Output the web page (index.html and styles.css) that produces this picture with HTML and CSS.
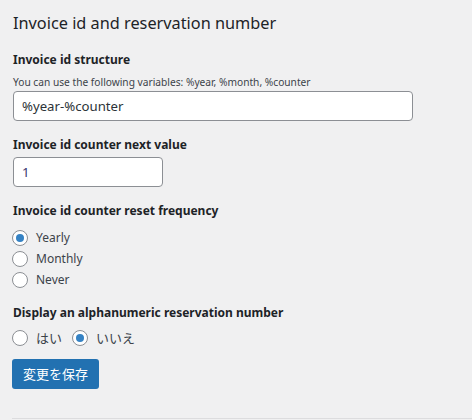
FILE: index.html
```html
<!DOCTYPE html>
<html lang="en">
<head>
<meta charset="utf-8">
<link rel="stylesheet" href="styles.css">
</head>
<body>
<div class="wrap">
  <h2 class="title">Invoice id and reservation number</h2>

  <div class="field first">
    <div class="label">Invoice id structure</div>
    <div class="help">You can use the following variables: %year, %month, %counter</div>
    <div class="input wide">%year-%counter</div>
  </div>

  <div class="field">
    <div class="label">Invoice id counter next value</div>
    <div class="input narrow num">1</div>
  </div>

  <div class="field">
    <div class="label">Invoice id counter reset frequency</div>
    <div class="radios">
      <div class="radio-row"><span class="radio checked"></span><span class="rtext">Yearly</span></div>
      <div class="radio-row"><span class="radio"></span><span class="rtext">Monthly</span></div>
      <div class="radio-row"><span class="radio"></span><span class="rtext">Never</span></div>
    </div>
  </div>

  <div class="field after-radios">
    <div class="label">Display an alphanumeric reservation number</div>
    <div class="inline-radios">
      <div class="radio-row"><span class="radio"></span><span class="rtext jp">はい</span></div>
      <div class="radio-row"><span class="radio checked"></span><span class="rtext jp">いいえ</span></div>
    </div>
  </div>

  <div class="button">変更を保存</div>
</div>
<div class="rule"></div>
</body>
</html>
```

FILE: styles.css
```css
html, body {
  margin: 0;
  padding: 0;
  background: #f0f0f1;
}
body {
  font-family: "Noto Sans", "Noto Sans CJK JP", sans-serif;
  color: #3c434a;
  width: 472px;
  height: 420px;
  overflow: hidden;
  position: relative;
}
.wrap {
  padding: 11px 0 0 12px;
}
.title {
  margin: 0 0 0 1px;
  font-size: 16.3px;
  font-weight: 400;
  line-height: 24px;
  color: #1d2327;
}
.field {
  margin-top: 15px;
}
.field.first {
  margin-top: 16px;
}
.field.after-radios {
  margin-top: 16px;
}
.label {
  margin-left: 1px;
  font-size: 12px;
  font-weight: 700;
  line-height: 18px;
  color: #1d2327;
}
.help {
  margin: 6px 0 0 1px;
  font-size: 10.2px;
  line-height: 14px;
  color: #3c434a;
}
.input {
  box-sizing: border-box;
  margin: 3px 0 0 1px;
  height: 30px;
  border: 1px solid #8c8f94;
  border-radius: 4px;
  background: #fff;
  padding: 0 8px;
  font-size: 13.2px;
  line-height: 28px;
  color: #2c3338;
}
.input.wide {
  width: 400px;
  margin-top: 2px;
}
.input.narrow {
  width: 150px;
}
.input.num {
  color: #3b3570;
}
.radios {
  margin-top: 9px;
  display: flex;
  flex-direction: column;
  gap: 4px;
}
.inline-radios {
  margin-top: 7px;
  display: flex;
  gap: 10px;
}
.radio-row {
  display: flex;
  align-items: center;
  height: 17px;
}
.radio {
  box-sizing: border-box;
  width: 16px;
  height: 16px;
  border: 1px solid #8c8f94;
  border-radius: 50%;
  background: #fff;
  display: flex;
  align-items: center;
  justify-content: center;
  flex: none;
}
.radio.checked::before {
  content: "";
  width: 8px;
  height: 8px;
  border-radius: 50%;
  background: #3582c4;
}
.rtext {
  margin-left: 8px;
  font-size: 12px;
  line-height: 17px;
  color: #3c434a;
}
.rtext.jp {
  font-family: "Noto Sans CJK JP", sans-serif;
  font-size: 13px;
}
.button {
  width: fit-content;
  margin-top: 13px;
  height: 30px;
  box-sizing: border-box;
  padding: 0 11px;
  background: #2271b1;
  border-radius: 3px;
  color: #fff;
  font-family: "Noto Sans CJK JP", sans-serif;
  font-size: 13px;
  line-height: 30px;
}
.rule {
  position: absolute;
  left: 12px;
  right: 0;
  top: 418px;
  height: 1px;
  background: #dcdcde;
}
```
